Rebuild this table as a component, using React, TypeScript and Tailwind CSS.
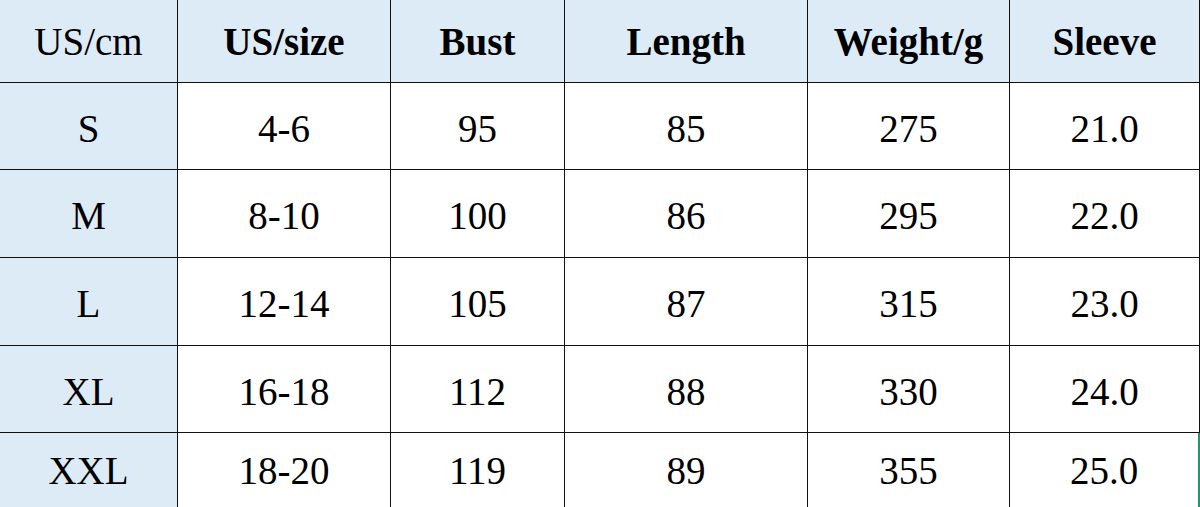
import React from 'react';

const headers = ['US/size', 'Bust', 'Length', 'Weight/g', 'Sleeve'];

const rows = [
  ['S', '4-6', '95', '85', '275', '21.0'],
  ['M', '8-10', '100', '86', '295', '22.0'],
  ['L', '12-14', '105', '87', '315', '23.0'],
  ['XL', '16-18', '112', '88', '330', '24.0'],
  ['XXL', '18-20', '119', '89', '355', '25.0'],
];

const rowHeights = ['h-[87px] pt-[4px]', 'h-[88px] pt-[4px]', 'h-[88px] pt-[4px]', 'h-[87px] pt-[4px]', 'h-[75px] pt-0'];

export default function App() {
  return (
    <div
      className="w-[1200px] h-[507px] overflow-hidden bg-white text-black text-[39px] leading-none"
      style={{ fontFamily: '"Liberation Serif", "Times New Roman", serif' }}
    >
      <div className="grid grid-cols-[178px_213px_174px_243px_202px_190px]">
        {/* header */}
        <div className="h-[83px] flex items-center justify-center bg-[#ddebf7] border-r border-b border-[#111]">
          US/cm
        </div>
        {headers.map((h) => (
          <div
            key={h}
            className="h-[83px] flex items-center justify-center bg-[#ddebf7] font-bold border-r border-b border-[#111]"
          >
            {h}
          </div>
        ))}

        {rows.map((r, i) =>
          r.map((cell, j) => {
            const last = i === rows.length - 1;
            return (
              <div
                key={`${i}-${j}`}
                className={[
                  rowHeights[i],
                  'flex items-center justify-center border-r',
                  last ? '' : 'border-b',
                  j === 0 ? 'bg-[#ddebf7]' : 'bg-white',
                  last && j === 5 ? 'border-r-2 border-[#111] border-r-[#1a9a6c]' : 'border-[#111]',
                ].join(' ')}
              >
                {cell}
              </div>
            );
          })
        )}
      </div>
    </div>
  );
}
